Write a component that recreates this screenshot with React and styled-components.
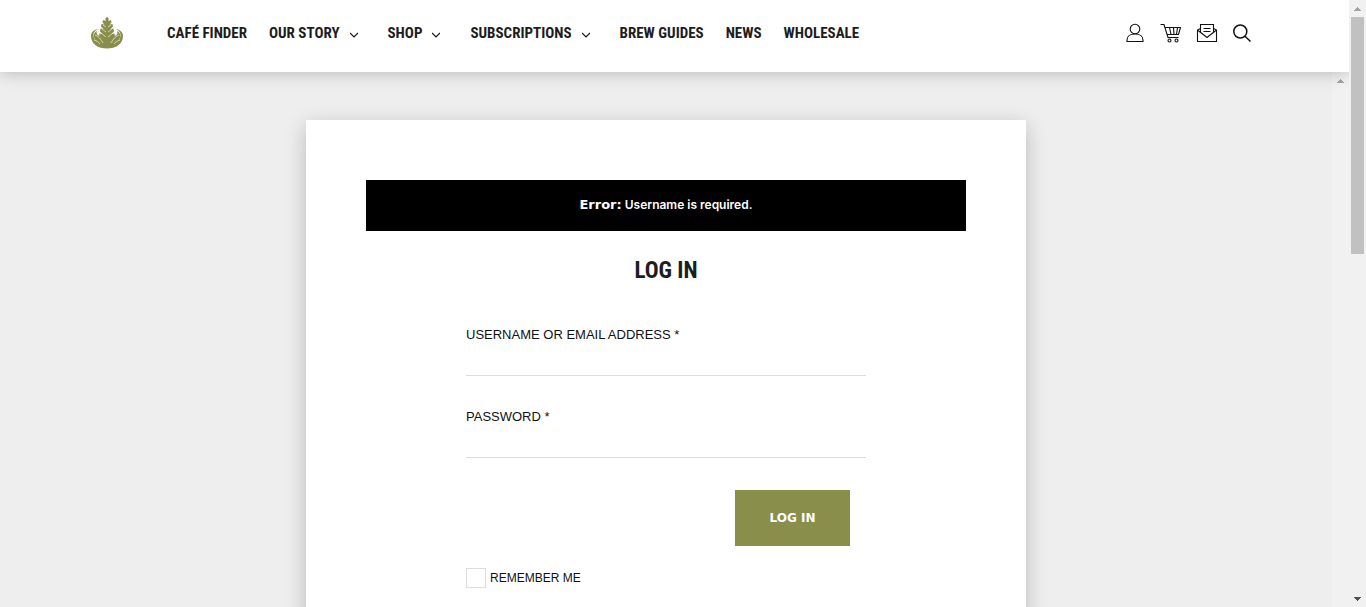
import React from 'react';
import styled, { createGlobalStyle } from 'styled-components';

const narrow = '"Roboto Condensed", "Open Sans Condensed", "Noto Sans Condensed", Roboto, "Liberation Sans", sans-serif';
const body = '"Liberation Sans", Arial, sans-serif';
const strong = 'Inter, "Liberation Sans", sans-serif';
const wide = '"DejaVu Sans", Verdana, sans-serif';

const GlobalStyle = createGlobalStyle`
  *, *::before, *::after { box-sizing: border-box; }
  body { margin: 0; background: #eee; color: #111; font-family: ${body}; }
`;

const Shell = styled.div`
  display: flex;
  height: 100vh;
  overflow: hidden;
`;

const Page = styled.div`
  flex: 1;
  min-width: 0;
  display: flex;
  flex-direction: column;
`;

const Header = styled.header`
  position: relative;
  z-index: 1;
  display: flex;
  align-items: center;
  flex-shrink: 0;
  height: 72px;
  padding: 0 95px 6px 90px;
  background: #fff;
  box-shadow: 0 0 16px rgba(0, 0, 0, 0.25);
`;

const LogoLink = styled.a`
  display: flex;
  margin-right: 43px;
`;

const Nav = styled.nav`
  display: flex;
  gap: 22px;
  flex: 1;
`;

const NavLink = styled.a`
  display: flex;
  align-items: center;
  gap: 10px;
  color: #1d1d1d;
  font: 700 15px/20px ${narrow};
  text-decoration: none;
  text-transform: uppercase;
  white-space: nowrap;

  svg { margin: 3px 8px 0 0; }
`;

const Tools = styled.div`
  display: flex;
  gap: 14px;
`;

const ToolLink = styled.a`
  display: flex;
  color: #111;
`;

const Body = styled.div`
  flex: 1;
  min-height: 0;
  display: flex;
`;

const Main = styled.main`
  flex: 1;
  min-width: 0;
  padding: 48px 24px 0;
  overflow: hidden;
`;

const Card = styled.section`
  max-width: 720px;
  min-height: 100vh;
  margin: 0 auto;
  padding: 60px;
  background: #fff;
  box-shadow: 0 6px 20px rgba(0, 0, 0, 0.22);
`;

const Notice = styled.div`
  padding: 15px 20px 16px;
  background: #000;
  color: #fff;
  font: 600 12px/20px ${strong};
  text-align: center;

  strong { font: 700 13px/16px ${wide}; }
`;

const Form = styled.form`
  max-width: 400px;
  margin: 0 auto;
`;

const Title = styled.h1`
  margin: 24px 0 39px;
  color: #1d1d1d;
  font: 700 23px/32px ${narrow};
  text-align: center;
`;

const Field = styled.div`
  margin-bottom: 32px;
`;

const Label = styled.label`
  display: block;
  font-size: 13px;
  line-height: 18px;
`;

const Input = styled.input`
  display: block;
  width: 100%;
  height: 32px;
  padding: 0;
  border: 0;
  border-bottom: 1px solid #ddd;
  border-radius: 0;
  background: transparent;
  font: 14px ${body};
  outline: none;
`;

const Actions = styled.div`
  display: flex;
  justify-content: flex-end;
  padding-right: 16px;
`;

const Submit = styled.button`
  min-width: 115px;
  height: 56px;
  border: 0;
  background: #8a8e4b;
  color: #fff;
  font: 700 12px/20px ${wide};
`;

const Remember = styled.label`
  display: flex;
  align-items: center;
  gap: 4px;
  margin-top: 22px;
  font-size: 12px;
  line-height: 20px;
`;

const Checkbox = styled.input`
  appearance: none;
  width: 20px;
  height: 20px;
  margin: 0;
  border: 1px solid #ddd;
  background: #fff;
`;

const Track = styled.div`
  display: flex;
  flex-direction: column;
  flex-shrink: 0;
  align-items: center;
  width: 17px;
  background: #f1f1f1;
`;

const WindowTrack = styled(Track)`
  position: relative;
  z-index: 2;
`;

const Arrow = styled.div`
  display: flex;
  align-items: center;
  justify-content: center;
  height: 17px;
`;

const Thumb = styled.div`
  width: 13px;
  height: ${(p) => p.$size};
  background: #c1c1c1;
`;

const Spacer = styled.div`
  flex: 1;
`;

function Logo() {
  return (
    <svg width="34" height="34" viewBox="0 0 34 34" fill="none" stroke="#8a8e4b" aria-hidden="true">
      <path fill="#8a8e4b" stroke="none" d="M1 20c0 8 7 12.500 16 12.500S33 28 33 20c0-4-3-6.500-7.500-7 3.500 1.500 5.500 4 5 7-.5 4-4 6-7 7l-6.500 1-6.500-1c-3-1-6.500-3-7-7-.5-3 1.500-5.500 5-7C4 13.500 1 16 1 20z" />
      <path fill="#8a8e4b" stroke="none" d="M7 15c-3 1.500-4 4-3 6.500 1 3 4 6 7 7.500h12c3-1.500 6-4.500 7-7.500 1-2.500 0-5-3-6.500 1 2 0 4-2 5l-5 4h-6l-5-4c-2-1-3-3-2-5z" />
      <path fill="#8a8e4b" stroke="none" d="M17 1l1.500 1v3l2.500-1 .5 2.500-2 2 3-.5.5 2.500-2.500 2.500 3-.5.500 3-2.500 2.500 3-.5.500 3-3 2.500 2 1-7 7-7-7 2-1-3-2.500.5-3 3 .5-2.500-2.500.5-3 3 .5-2.500-2.500.5-2.500 3 .5-2-2L13 4l2.500 1V2z" />
      <path strokeWidth=".6" stroke="#fff" d="M16 11l-3-2M18 11l3-2M16 16l-4-3M18 16l4-3M16 21l-5-4M18 21l5-4M5 19c3 1 6 4 8 8M29 19c-3 1-6 4-8 8M4 24c2 .5 5 2 6 4M30 24c-2 .5-5 2-6 4" />
    </svg>
  );
}

function Chevron() {
  return (
    <svg width="8" height="6" viewBox="0 0 8 6" fill="none" stroke="#111" strokeWidth="1.2" aria-hidden="true">
      <path d="M0 1l4 4 4-4" />
    </svg>
  );
}

const iconPaths = {
  Account: (
    <>
      <circle cx="10.500" cy="6" r="4.800" />
      <path d="M2.500 18.500v-1.500c0-3.400 3-6 8-6s8 2.600 8 6v1.500z" />
    </>
  ),
  Cart: (
    <>
      <path d="M0 1.500h3.500l4 13H18" />
      <path d="M4.500 4.500h15.500l-2 7H6.500M9 4.500l1.500 7M13 4.500l.5 7M17 4.500l-1 7" />
      <circle cx="9" cy="17.500" r="1.500" />
      <circle cx="16" cy="17.500" r="1.500" />
    </>
  ),
  Newsletter: (
    <>
      <path d="M4 5.500L1 7v11.500h19V7L17 5.500M1 7l9.500 7.500L20 7" />
      <path d="M4 9.500v-8h13v8M7 5.500h7M7 8.500h7" />
    </>
  ),
  Search: (
    <>
      <circle cx="7.800" cy="8.500" r="6.500" strokeWidth="1.500" />
      <path d="M12.300 13l5.700 5.500" strokeWidth="1.500" />
    </>
  ),
};

function ToolIcon({ name }) {
  return (
    <svg width="22" height="20" viewBox="0 0 21 20" fill="none" stroke="currentColor" strokeWidth="1.100" aria-hidden="true">
      {iconPaths[name]}
    </svg>
  );
}

function Triangle({ color, down }) {
  return (
    <svg width="7" height="4" viewBox="0 0 7 4" fill={color} shapeRendering="crispEdges" aria-hidden="true">
      <path d={down ? 'M0 0h7v1H6v1H5v1H4v1H3V3H2V2H1V1H0z' : 'M3 0h1v1h1v1h1v1h1v1H0V3h1V2h1V1h1z'} />
    </svg>
  );
}

const links = [
  ['Café Finder'],
  ['Our Story', true],
  ['Shop', true],
  ['Subscriptions', true],
  ['Brew Guides'],
  ['News'],
  ['Wholesale'],
];

export default function App() {
  return (
    <>
      <GlobalStyle />
      <Shell>
        <Page>
          <Header>
            <LogoLink href="#" aria-label="Home"><Logo /></LogoLink>
            <Nav>
              {links.map(([text, menu]) => (
                <NavLink href="#" key={text}>
                  {text}
                  {menu && <Chevron />}
                </NavLink>
              ))}
            </Nav>
            <Tools>
              {Object.keys(iconPaths).map((name) => (
                <ToolLink href="#" key={name} aria-label={name}><ToolIcon name={name} /></ToolLink>
              ))}
            </Tools>
          </Header>
          <Body>
            <Main>
              <Card>
                <Notice role="alert"><strong>Error:</strong> Username is required.</Notice>
                <Form>
                  <Title>LOG IN</Title>
                  <Field>
                    <Label htmlFor="username">USERNAME OR EMAIL ADDRESS *</Label>
                    <Input id="username" type="text" />
                  </Field>
                  <Field>
                    <Label htmlFor="password">PASSWORD *</Label>
                    <Input id="password" type="password" />
                  </Field>
                  <Actions><Submit type="submit">LOG IN</Submit></Actions>
                  <Remember>
                    <Checkbox type="checkbox" />
                    REMEMBER ME
                  </Remember>
                </Form>
              </Card>
            </Main>
            <Track aria-hidden="true">
              <Arrow><Triangle color="#a3a3a3" /></Arrow>
            </Track>
          </Body>
        </Page>
        <WindowTrack aria-hidden="true">
          <Arrow><Triangle color="#a3a3a3" /></Arrow>
          <Thumb $size="39%" />
          <Spacer />
          <Arrow><Triangle color="#505050" down /></Arrow>
        </WindowTrack>
      </Shell>
    </>
  );
}
